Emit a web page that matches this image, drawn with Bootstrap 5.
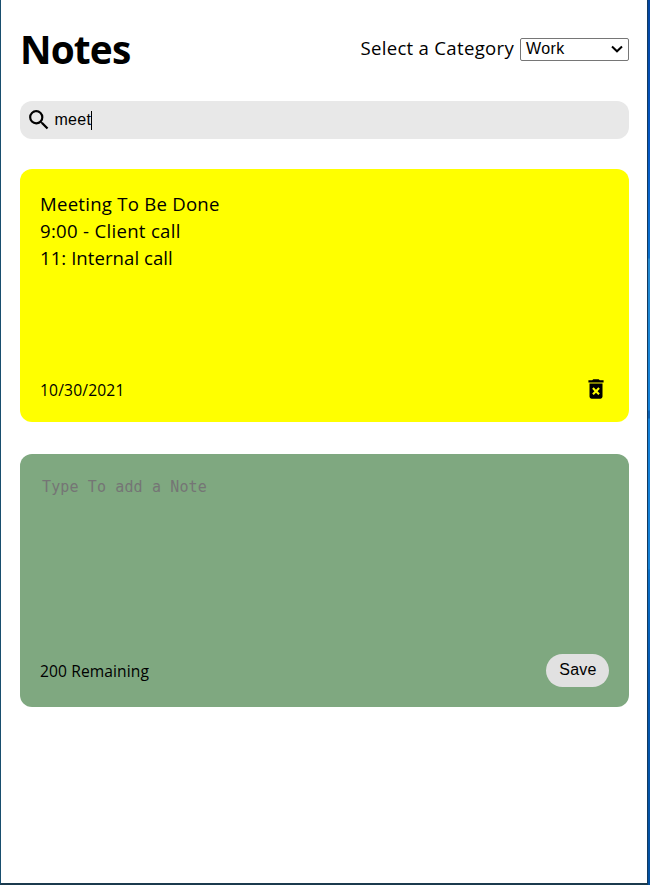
<!DOCTYPE html>
<html lang="en">
<head>
<meta charset="utf-8">
<meta name="viewport" content="width=device-width, initial-scale=1">
<title>Notes</title>
<link href="https://cdn.jsdelivr.net/npm/bootstrap@5.3.0/dist/css/bootstrap.min.css" rel="stylesheet">
<style>
body { font-family: "Segoe UI", "Open Sans", "Noto Sans", sans-serif; color: #000; }
.desktop { height: 885px; background: linear-gradient(#0345a0 0, #0558c4 150px, #0a68cc 210px, #0a70cc 258px, #2489d0 259px, #1b86d4 330px, #1380d8 410px, #0860b4 411px, #0860b4 418px, #1380d8 419px, #1580d4 569px, #0a70c8 570px, #0558b0 680px, #0350a0 885px); }
.window { border: solid #184e6e; border-width: 0 1px 2px; border-right-color: #123a60; border-bottom-color: #1b3a4d; padding: 23px 18px 0 19px; margin-right: 2px; }
.title { font-size: 38.8px; line-height: 52px; letter-spacing: -.85px; }
.category { font-size: 18.6px; line-height: 26px; letter-spacing: .29px; }
.category-label { padding-bottom: 2px; }
.picker { font: 16px/21px "Liberation Sans", sans-serif; width: 109px; height: 23px; border: 1px solid #767676; border-radius: 2px; padding: 0 5px; margin-left: 6px; letter-spacing: 0; }
.picker-value { padding-bottom: 1px; letter-spacing: .4px; }
.search { height: 38px; margin-top: 26px; background: #e8e8e8; border-radius: 12px; padding-left: 8px; font: 16px/20px "Liberation Sans", sans-serif; }
.query { letter-spacing: .25px; margin-left: 4.5px; }
.caret { width: 1px; height: 19px; background: #000; }
.note { height: 253px; border-radius: 12px; padding: 20px; }
.note-work { background: #ff0; margin-top: 30px; }
.note-new { background: #7fa880; margin-top: 32px; }
.note-text { font-size: 18.6px; line-height: 27px; letter-spacing: .24px; padding-top: 1px; }
.note-text div:nth-child(2) { letter-spacing: .29px; }
.note-text div:nth-child(3) { letter-spacing: .04px; }
.note-hint { font: 15px/20px "DejaVu Sans Mono", monospace; letter-spacing: .13px; color: #757575; padding: 3px 0 0 2px; }
.note-foot { font-size: 15.6px; line-height: 24px; letter-spacing: .1px; }
.note-date { letter-spacing: .18px; padding-top: 2px; }
.save { width: 63px; height: 33px; border-radius: 17px; background: #e1e1e1; font: 16px/18px "Liberation Sans", sans-serif; letter-spacing: .2px; }
.save span { display: block; padding: 0 0 2px 1px; }
</style>
</head>
<body>
<div class="desktop">
<main class="window h-100 bg-white">
  <header class="d-flex justify-content-between align-items-center">
    <h1 class="title fw-bold m-0">Notes</h1>
    <div class="category d-flex align-items-center">
      <span class="category-label">Select a Category</span>
      <div class="picker d-flex align-items-center justify-content-between" role="combobox">
        <span class="picker-value">Work</span>
        <svg width="12" height="8" viewBox="0 0 12 8" fill="none" stroke="#000" stroke-width="2"><path d="M1 1.5l5 4.800 5-4.800"/></svg>
      </div>
    </div>
  </header>
  <div class="search d-flex align-items-center">
    <svg width="22" height="22" viewBox="2 2 20 20"><path d="M15.5 14h-.79l-.28-.27A6.47 6.47 0 0 0 16 9.5 6.5 6.5 0 1 0 9.5 16c1.61 0 3.09-.59 4.23-1.57l.27.28v.79l5 4.99L20.49 19l-4.99-5zm-6 0C7.01 14 5 11.99 5 9.5S7.01 5 9.5 5 14 7.01 14 9.5 11.99 14 9.5 14z"/></svg>
    <span class="query">meet</span><span class="caret"></span>
  </div>
  <article class="note note-work d-flex flex-column justify-content-between">
    <div class="note-text"><div>Meeting To Be Done</div><div>9:00 - Client call</div><div>11: Internal call</div></div>
    <div class="note-foot d-flex justify-content-between align-items-center">
      <span class="note-date">10/30/2021</span>
      <svg width="26" height="26" viewBox="0 0 24 24"><path d="M6 19c0 1.100.9 2 2 2h8c1.100 0 2-.9 2-2V7H6v12zm2.460-7.120l1.410-1.410L12 12.590l2.120-2.120 1.410 1.410L13.410 14l2.120 2.120-1.410 1.410L12 15.410l-2.120 2.120-1.410-1.410L10.590 14l-2.130-2.120zM15.500 4l-1-1h-5l-1 1H5v2h14V4z"/></svg>
    </div>
  </article>
  <article class="note note-new d-flex flex-column justify-content-between">
    <div class="note-hint">Type To add a Note</div>
    <div class="note-foot d-flex justify-content-between align-items-center">
      <span>200 Remaining</span>
      <button class="save border-0 p-0" type="button"><span>Save</span></button>
    </div>
  </article>
</main>
</div>
<script src="https://cdn.jsdelivr.net/npm/bootstrap@5.3.0/dist/js/bootstrap.bundle.min.js"></script>
</body>
</html>
